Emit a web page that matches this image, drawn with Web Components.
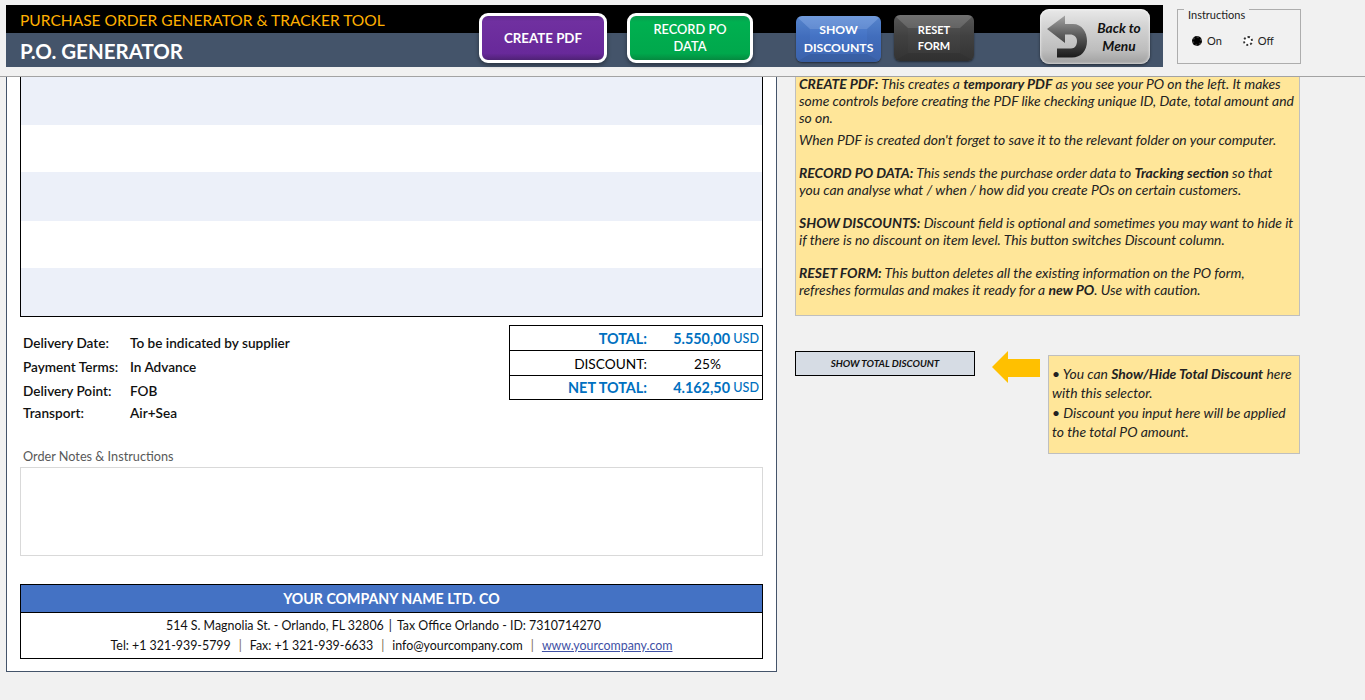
<!DOCTYPE html>
<html><head><meta charset="utf-8"><title>P.O. Generator</title>
<style>
html,body{margin:0;padding:0;height:700px;overflow:hidden;background:#f1f1f1;font-family:Lato,"Open Sans",sans-serif;color:#000}
</style></head><body>
<po-app></po-app>
<script>
function def(name, css, html){
  customElements.define(name, class extends HTMLElement{
    constructor(){super();const s=this.attachShadow({mode:'open'});s.innerHTML='<style>'+css+'</style>'+html;}
  });
}
def('gloss-btn',`
:host{display:flex;align-items:center;justify-content:center;text-align:center;box-sizing:border-box;font-family:Lato,sans-serif;color:#fff;font-weight:700;line-height:17px;position:relative}
:host([bevel])::before{content:"";position:absolute;inset:0;box-sizing:border-box;border-radius:inherit;border-style:solid;border-width:13px 14px 8px;border-color:rgba(255,255,255,.13) rgba(0,0,0,.04) rgba(0,0,0,.10) rgba(0,0,0,.04)}
span{position:relative}
`,'<span><slot></slot></span>');
def('back-btn',`
:host{display:flex;align-items:center;box-sizing:border-box;width:110px;height:55px;border-radius:9px;position:relative;background:linear-gradient(180deg,#e9e9e9 0,#d4d4d4 30%,#bdbdbd 75%,#a0a0a0 100%);box-shadow:inset 0 0 3px #fff,0 1px 3px rgba(0,0,0,.5)}
svg{width:46px;height:46px;margin-left:5px;flex:none}
span{flex:1;text-align:center;font:italic 700 13.7px/18px Lato,sans-serif;color:#111;padding-right:3px;margin-top:1px}
`,`<svg viewBox="0 0 46 46"><defs><linearGradient id="g" x1="0" y1="0" x2="0" y2="1"><stop offset="0" stop-color="#a4a4a4"/><stop offset=".45" stop-color="#5e5e5e"/><stop offset="1" stop-color="#1a1a1a"/></linearGradient></defs><path d="M2 15 L20 1.5 V10 H28 C37 10 42 18 42 27 C42 37 36 43.5 27 43.5 H12 V34.5 H26 C30 34.5 32 31 32 27 C32 23 29 20.5 25 20.5 H20 V29 Z" fill="url(#g)"/></svg><span><slot></slot></span>`);
def('option-group',`
:host{display:block;box-sizing:border-box;width:124px;height:55px;border:1px solid #adadad;position:relative;font:11px Lato,sans-serif;color:#222;margin-top:4px}
.lg{position:absolute;left:6px;top:-2px;background:#f1f1f1;padding:0 4px;font-size:11px;line-height:13px;margin-top:-3px;padding-top:3px}
.row{display:flex;gap:21px;padding:25px 0 0 14px}
.o{display:flex;align-items:center;gap:5px;line-height:13px;margin-top:-1px}
.r{width:10px;height:10px;border-radius:50%;border:2px dotted #333;box-sizing:border-box;background:#fff}
.on{background:#000}
`,`<span class="lg">Instructions</span><div class="row"><span class="o"><span class="r on"></span>On</span><span class="o"><span class="r"></span>Off</span></div>`);
def('po-header',`
:host{display:flex;box-sizing:border-box;height:77px;padding:5px 0 0 6px;border-bottom:1px solid #a3a3a3;background:#f1f1f1;align-items:flex-start}
.banner{width:1157px;height:62px;background:linear-gradient(180deg,#000 0,#000 28px,#44546a 28px,#44546a 100%);display:flex;align-items:flex-start;position:relative}
.titles{width:473px;padding-left:14px;box-sizing:border-box}
.t1{height:28px;line-height:30px;color:#ffb000;font-size:15.55px;white-space:nowrap}
.t2{height:34px;line-height:37px;color:#fff;font-size:20.5px;font-weight:700;white-space:nowrap}
.pdf{width:128px;height:50px;margin-top:8px;font-size:13.3px;background:linear-gradient(180deg,#5f2a8c 0,#7030a0 12%,#68299a 85%,#4f2275 100%);border:3px solid #fff;border-radius:9px;box-shadow:0 2px 4px rgba(0,0,0,.4)}
.rec{width:126px;height:50px;margin:8px 0 0 20px;background:linear-gradient(180deg,#0a9a4e 0,#00b050 14%,#00a84c 85%,#058a40 100%);border:3px solid #fff;border-radius:9px;box-shadow:0 2px 4px rgba(0,0,0,.4);font-size:12.8px;line-height:17px;font-weight:600}
.dis{width:85px;height:46px;margin:11px 0 0 43px;background:linear-gradient(180deg,#5b8bd6 0,#4472c4 45%,#3f68b4 100%);border-radius:6px;box-shadow:0 1px 2px rgba(0,0,0,.5);font-size:12.2px;line-height:18px}
.res{width:80px;height:46px;margin:10px 0 0 13px;background:linear-gradient(180deg,#5c5c5c 0,#444 45%,#363636 100%);border-radius:6px;box-shadow:0 1px 2px rgba(0,0,0,.5);font-size:11px;line-height:16px}
back-btn{margin:4px 0 0 66px}
option-group{margin-left:14px}
`,`<div class="banner"><div class="titles"><div class="t1">PURCHASE ORDER GENERATOR &amp; TRACKER TOOL</div><div class="t2">P.O. GENERATOR</div></div>
<gloss-btn class="pdf">CREATE PDF</gloss-btn><gloss-btn class="rec">RECORD PO<br>DATA</gloss-btn><gloss-btn bevel class="dis">SHOW<br>DISCOUNTS</gloss-btn><gloss-btn bevel class="res">RESET<br>FORM</gloss-btn><back-btn>Back to<br>Menu</back-btn></div><option-group></option-group>`);
def('item-bands',`
:host{display:block;box-sizing:border-box;height:240px;border:1px solid #000;border-top:0;background:#fff}
div{background:#ecf0f9}
.a{height:48px}.w{background:#fff;height:47px}.c{height:49px}.d{background:#fff;height:47px}.e{height:48px}
`,`<div class="a"></div><div class="w"></div><div class="c"></div><div class="d"></div><div class="e"></div>`);
def('terms-list',`
:host{display:grid;grid-template-columns:107px auto;grid-template-rows:24px 24px 24px 20px;font:600 13.6px/16px Lato,sans-serif;color:#111;align-items:center;padding-left:3px;align-content:start}
`,`<span>Delivery Date:</span><span>To be indicated by supplier</span><span>Payment Terms:</span><span>In Advance</span><span>Delivery Point:</span><span>FOB</span><span>Transport:</span><span>Air+Sea</span>`);
def('totals-box',`
:host{display:block;box-sizing:border-box;width:254px;height:75px;border:1px solid #000;font:13.7px Lato,sans-serif;color:#000}
.r{display:grid;grid-template-columns:137px 83px 1fr;align-items:center;height:24px;border-bottom:1px solid #000}
.r:first-child{height:25px}.r:last-child{border:0;height:23px}
.l{text-align:right;white-space:nowrap}.v{text-align:right;white-space:nowrap}
.u{text-align:right;padding-right:3px;font-size:12.6px;color:#0070c0;font-weight:500}
.b{color:#0070c0;font-weight:700;font-size:14.4px}
.c{text-align:center;padding-left:38px}
`,`<div class="r b"><span class="l">TOTAL:</span><span class="v">5.550,00</span><span class="u">USD</span></div>
<div class="r"><span class="l">DISCOUNT:</span><span class="v c">25%</span><span></span></div>
<div class="r b"><span class="l">NET TOTAL:</span><span class="v">4.162,50</span><span class="u">USD</span></div>`);
def('company-footer',`
:host{display:block;box-sizing:border-box;height:75px;border:1px solid #000;font:12.4px/19.5px Lato,sans-serif;text-align:center;color:#111}
.h{height:27px;background:#4472c4;color:#fff;font-weight:700;font-size:14.2px;line-height:28px;border-bottom:1px solid #000}
.l{padding-top:3px}
.one{padding-right:16px}
.s{margin:0 8px;color:#7a6a4f}
.s2{margin:0 5px}
a{color:#3f51a5;text-decoration:underline}
`,`<div class="h">YOUR COMPANY NAME LTD. CO</div><div class="l"><div class="one">514 S. Magnolia St. - Orlando, FL 32806<span class="s2">|</span>Tax Office Orlando - ID: 7310714270</div><div>Tel: +1 321-939-5799<span class="s">|</span>Fax: +1 321-939-6633<span class="s">|</span>info@yourcompany.com<span class="s">|</span><a href="#">www.yourcompany.com</a></div></div>`);
def('po-sheet',`
:host{display:block;box-sizing:border-box;width:771px;height:595px;margin-left:6px;background:#fff;border:1px solid #44546a;border-top:0;padding:0 13px}
.mid{display:flex;justify-content:space-between;height:126px;padding-top:8px;box-sizing:border-box}
terms-list{padding-top:6px}
.lbl{font:12.7px/16px Lato,sans-serif;color:#595959;padding-left:3px;height:18px;margin-top:5px}
.notes{height:89px;box-sizing:border-box;border:1px solid #d9d9d9;margin:1px 0 28px}
`,`<item-bands></item-bands><div class="mid"><terms-list></terms-list><totals-box></totals-box></div><div class="lbl">Order Notes &amp; Instructions</div><div class="notes"></div><company-footer></company-footer>`);
def('note-box',`
:host{display:block;box-sizing:border-box;background:#ffe699;border:1px solid #bfbfbf;font:italic 13.9px/17px Lato,sans-serif;color:#222;padding:0 3px}
`,'<slot></slot>');
def('po-side',`
:host{display:block;width:505px;margin-left:18px;font:13.9px Lato,sans-serif}
.top{height:239px;border-top:0;line-height:17px;overflow:hidden}
p{margin:0}
.sel{display:flex;align-items:flex-start;margin-top:34px}
.show{box-sizing:border-box;width:180px;height:25px;background:#d6dce4;border:1px solid #000;font:italic 700 9.9px/23px Lato,sans-serif;color:#111;text-align:center;margin-top:1px}
svg{margin:0 0 0 17px;flex:none;display:block}
.tip{width:252px;height:99px;margin:5px 0 0 8px;padding-top:8px}
.tip p{line-height:19px}
`,`<note-box class="top"><p style="margin-top:-2px"><b>CREATE PDF:</b> This creates a <b>temporary PDF</b> as you see your PO on the left. It makes some controls before creating the PDF like checking unique ID, Date, total amount and so on.</p>
<p style="margin-top:5px">When PDF is created don't forget to save it to the relevant folder on your computer.</p>
<p style="margin-top:16px"><b>RECORD PO DATA:</b> This sends the purchase order data to <b>Tracking section</b> so that you can analyse what / when / how did you create POs on certain customers.</p>
<p style="margin-top:16px"><b>SHOW DISCOUNTS:</b> Discount field is optional and sometimes you may want to hide it if there is no discount on item level. This button switches Discount column.</p>
<p style="margin-top:16px"><b>RESET FORM:</b> This button deletes all the existing information on the PO form, refreshes formulas and makes it ready for a <b>new PO</b>. Use with caution.</p></note-box>
<div class="sel"><div class="show">SHOW TOTAL DISCOUNT</div><svg width="48" height="34" viewBox="0 0 48 34"><path d="M0 17 L16 1 V9 H48 V27 H16 V33 Z" fill="#ffc000"/></svg>
<note-box class="tip"><p>• You can <b>Show/Hide Total Discount</b> here with this selector.</p><p style="margin-top:1px">• Discount you input here will be applied to the total PO amount.</p></note-box></div>`);
def('po-app',`
:host{display:block;width:1365px;height:700px;background:#f1f1f1}
.main{display:flex;align-items:flex-start}
`,`<po-header></po-header><div class="main"><po-sheet></po-sheet><po-side></po-side></div>`);
</script>
</body></html>
